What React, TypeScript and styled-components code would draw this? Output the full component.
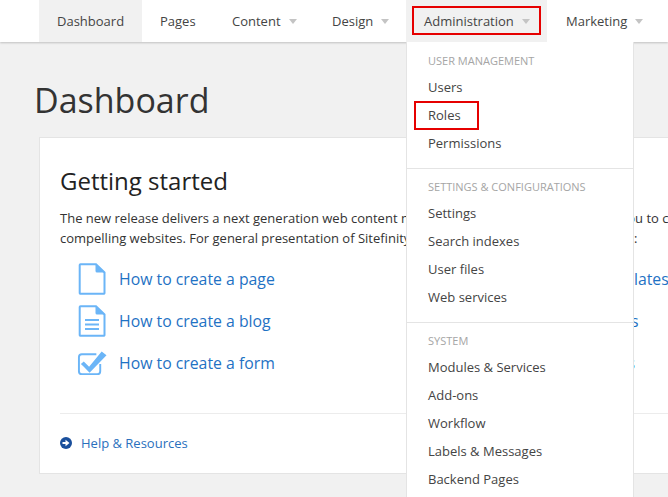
import React from "react";
import styled, { createGlobalStyle } from "styled-components";

const Global = createGlobalStyle`
  html, body { margin: 0; padding: 0; width: 668px; height: 497px; overflow: hidden; background: #f1f1f1; }
  body { font-family: "Open Sans", "Liberation Sans", sans-serif; color: #333; }
  * { box-sizing: border-box; }
`;

const Page = styled.div`
  width: 668px;
  height: 497px;
  overflow: hidden;
  position: relative;
`;
const TopBar = styled.nav`
  height: 42px;
  background: #fff;
  box-shadow: 0 1px 2px rgba(0, 0, 0, 0.2);
  display: flex;
  padding-left: 39px;
  position: relative;
  z-index: 2;
`;
const NavItem = styled.div<{ $active?: boolean; $width: number; $inset?: number }>`
  position: relative;
  flex: none;
  width: ${(p) => p.$width}px;
  height: 42px;
  padding-left: ${(p) => p.$inset ?? 18}px;
  display: flex;
  align-items: center;
  gap: 8px;
  font-size: 13px;
  color: #444;
  white-space: nowrap;
  background: ${(p) => (p.$active ? "#f1f1f1" : "transparent")};
`;
const Caret = styled.span`
  width: 0;
  height: 0;
  border-left: 4px solid transparent;
  border-right: 4px solid transparent;
  border-top: 5px solid #c4c4c4;
  margin-top: 1px;
`;
const NavMark = styled.span`
  position: absolute;
  left: 6px;
  right: 6px;
  top: 6px;
  bottom: 7px;
  border: 2px solid #e60000;
`;
const Menu = styled.div`
  position: absolute;
  left: 0;
  top: 42px;
  width: 228px;
  background: #fff;
  border: 1px solid #e4e4e4;
  border-top: none;
`;
const MenuGroup = styled.section`
  padding: 8px 0 11px;
  border-bottom: 1px solid #e4e4e4;
  &:first-child { padding-top: 9px; }
`;
const MenuHeading = styled.div`
  height: 20px;
  line-height: 20px;
  margin-bottom: 2px;
  padding-left: 21px;
  font-size: 11px;
  color: #a5a5a5;
  text-transform: uppercase;
`;
const MenuItem = styled.div`
  position: relative;
  height: 28px;
  line-height: 28px;
  padding-left: 21px;
  font-size: 13px;
  color: #444;
`;
const MenuMark = styled.span`
  position: absolute;
  left: 7px;
  top: 0;
  width: 65px;
  height: 29px;
  border: 2px solid #e60000;
`;
const Main = styled.main`
  padding: 0 0 0 34px;
`;
const PageTitle = styled.h1`
  margin: 0;
  height: 95px;
  padding-top: 34px;
  font-size: 34px;
  line-height: 48px;
  font-weight: 400;
  color: #333;
  white-space: nowrap;
`;
const Card = styled.div`
  width: 700px;
  height: 337px;
  margin-left: 5px;
  background: #fff;
  border: 1px solid #e4e4e4;
  padding: 26px 0 0 20px;
`;
const CardTitle = styled.h2`
  margin: 0 0 10px;
  font-size: 24px;
  line-height: 34px;
  font-weight: 400;
  color: #222;
`;
const Intro = styled.p`
  margin: 0;
  font-size: 13px;
  line-height: 20px;
  color: #333;
  white-space: nowrap;
`;
const LinkGrid = styled.div`
  display: grid;
  grid-template-columns: 356px 1fr;
  grid-auto-rows: 42px;
  margin-top: 10px;
  padding-left: 17px;
`;
const GuideLink = styled.div`
  display: flex;
  align-items: center;
  gap: 12px;
  font-size: 15.8px;
  color: #1f72c4;
  white-space: nowrap;
`;
const IconSlot = styled.span`
  width: 30px;
  height: 32px;
  display: flex;
  align-items: center;
  justify-content: center;
  flex: none;
`;
const Divider = styled.div`
  height: 1px;
  background: #ececec;
  margin-top: 29px;
`;
const HelpLink = styled.div`
  display: flex;
  align-items: center;
  gap: 9px;
  height: 20px;
  margin-top: 19px;
  font-size: 13px;
  color: #2a70bd;
`;

const blue = "#6bb5f7";
const PageIcon = () => (
  <svg width="28" height="32" viewBox="0 0 28 32" fill="none">
    <path d="M2.5 1.2H18L26.5 9.5V30a.8.8 0 0 1-.8.8H2.5a.8.8 0 0 1-.8-.8V2a.8.8 0 0 1 .8-.8Z" stroke={blue} strokeWidth="2" />
    <path d="M17.5 1.5V8a1.5 1.5 0 0 0 1.5 1.5h7.5Z" fill={blue} />
  </svg>
);
const BlogIcon = () => (
  <svg width="28" height="32" viewBox="0 0 28 32" fill="none">
    <path d="M2.5 1.2H18L26.5 9.5V30a.8.8 0 0 1-.8.8H2.5a.8.8 0 0 1-.8-.8V2a.8.8 0 0 1 .8-.8Z" stroke={blue} strokeWidth="2" />
    <path d="M17.5 1.5V8a1.5 1.5 0 0 0 1.5 1.5h7.5Z" fill={blue} />
    <path d="M7 15h14M7 19.5h14M7 24h14" stroke={blue} strokeWidth="2" />
  </svg>
);
const CheckIcon = () => (
  <svg width="31" height="26" viewBox="0 0 31 26" fill="none">
    <path d="M24 14v7.5a3 3 0 0 1-3 3H5a3 3 0 0 1-3-3V7a3 3 0 0 1 3-3h15" stroke={blue} strokeWidth="2" />
    <path d="M7 11.5 L12.5 17 L25.5 1 L30.5 5 L13 23 L7 17 L4 14 Z" fill={blue} />
  </svg>
);
const ArrowIcon = () => (
  <svg width="12" height="12" viewBox="0 0 12 12">
    <circle cx="6" cy="6" r="6" fill="#1a4f9c" />
    <path d="M2.5 5h3V2.8L9.5 6 5.5 9.2V7h-3Z" fill="#fff" />
  </svg>
);

const groups: { title: string; items: string[] }[] = [
  { title: "User Management", items: ["Users", "Roles", "Permissions"] },
  { title: "Settings & Configurations", items: ["Settings", "Search indexes", "User files", "Web services"] },
  { title: "System", items: ["Modules & Services", "Add-ons", "Workflow", "Labels & Messages", "Backend Pages"] },
];

export default function App() {
  return (
    <Page>
      <Global />
      <TopBar>
        <NavItem $active $width={103}>Dashboard</NavItem>
        <NavItem $width={72}>Pages</NavItem>
        <NavItem $width={100}>Content <Caret /></NavItem>
        <NavItem $width={92}>Design <Caret /></NavItem>
        <NavItem $active $width={141}>
          Administration <Caret />
          <NavMark />
          <Menu>
            {groups.map((g) => (
              <MenuGroup key={g.title}>
                <MenuHeading>{g.title}</MenuHeading>
                {g.items.map((i) => (
                  <MenuItem key={i}>
                    {i}
                    {i === "Roles" && <MenuMark />}
                  </MenuItem>
                ))}
              </MenuGroup>
            ))}
          </Menu>
        </NavItem>
        <NavItem $width={121} $inset={19}>Marketing <Caret /></NavItem>
      </TopBar>
      <Main>
        <PageTitle>Dashboard</PageTitle>
        <Card>
          <CardTitle>Getting started</CardTitle>
          <Intro>The new release delivers a next generation web content management system which enables you to create</Intro>
          <Intro>compelling websites. For general presentation of Sitefinity CMS, view these videos and tutorials:</Intro>
          <LinkGrid>
            <GuideLink><IconSlot><PageIcon /></IconSlot>How to create a page</GuideLink>
            <GuideLink><IconSlot><PageIcon /></IconSlot>How to manage templates</GuideLink>
            <GuideLink><IconSlot><BlogIcon /></IconSlot>How to create a blog</GuideLink>
            <GuideLink><IconSlot><BlogIcon /></IconSlot>How to create widgets</GuideLink>
            <GuideLink><IconSlot><CheckIcon /></IconSlot>How to create a form</GuideLink>
            <GuideLink><IconSlot><CheckIcon /></IconSlot>How to create layouts</GuideLink>
          </LinkGrid>
          <Divider />
          <HelpLink><ArrowIcon />Help &amp; Resources</HelpLink>
        </Card>
      </Main>
    </Page>
  );
}
